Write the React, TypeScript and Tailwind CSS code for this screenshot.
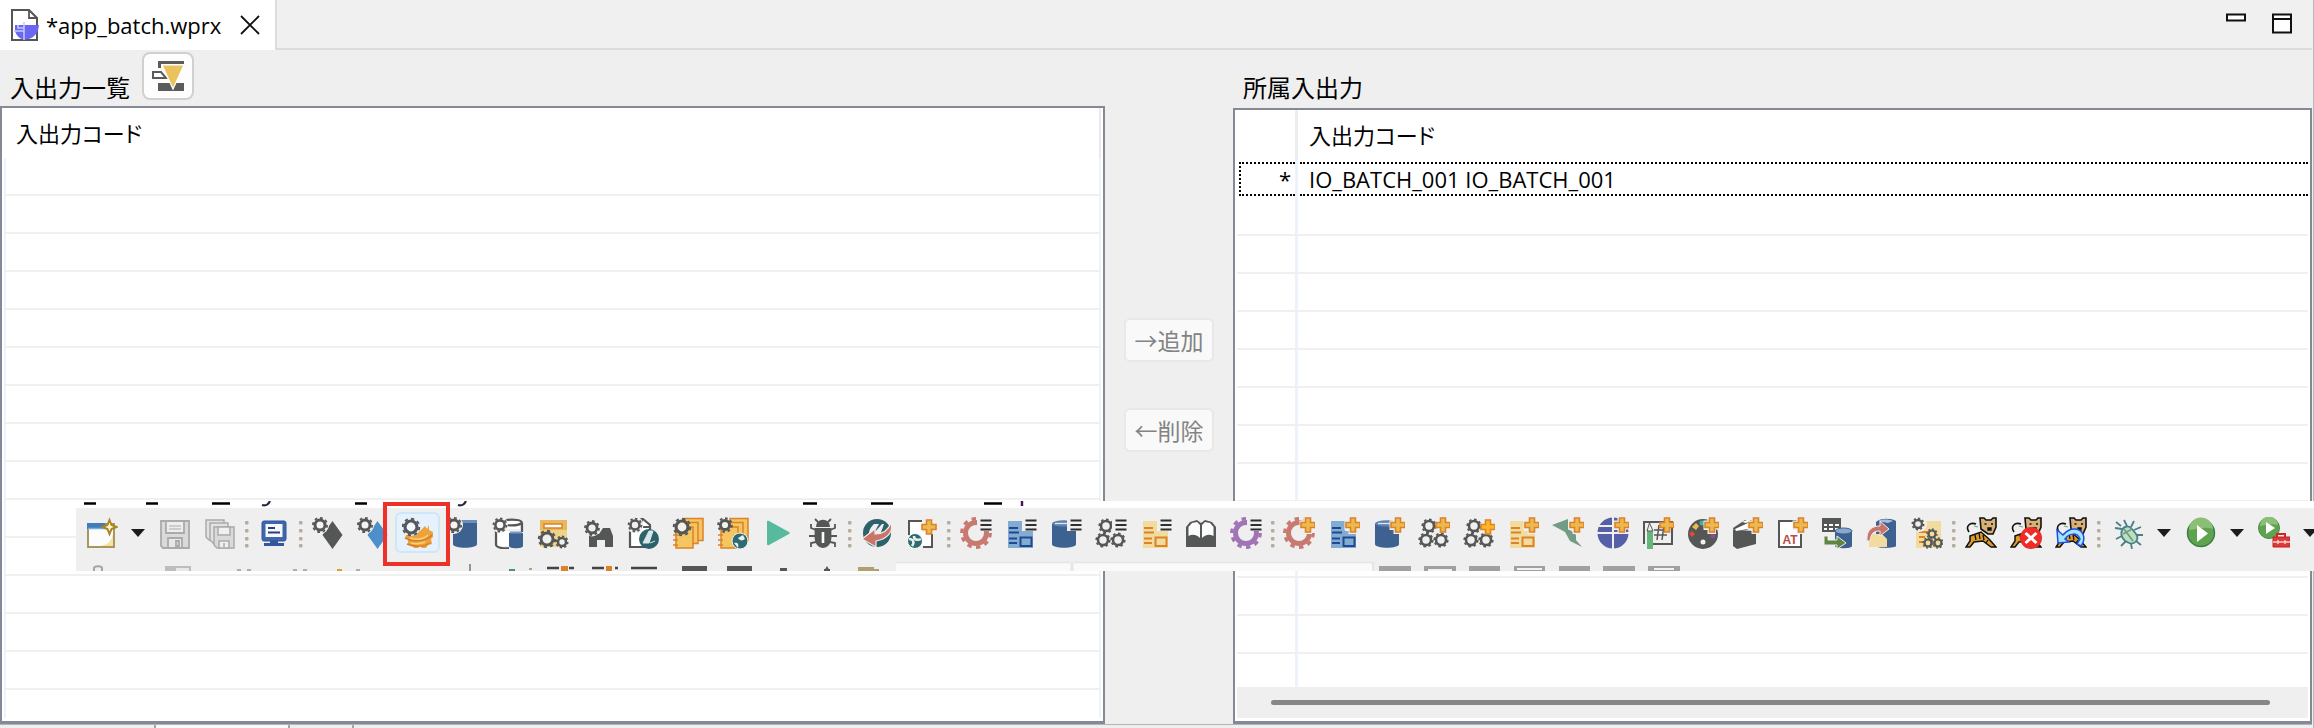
import React from "react";

const DARK = "#555756";
const BLUE = "#3d6190";
const ORANGE = "#dc8228";

type GearProps = { x: number; y: number; r: number; w?: number; c?: string; teeth?: number; t?: number; fill?: string };

function Gear({ x, y, r, w = 3, c = DARK, teeth = 8, t = 2, fill = "none" }: GearProps) {
  return (
    <g stroke={c}>
      <circle cx={x} cy={y} r={r} strokeWidth={w} fill={fill} />
      <circle cx={x} cy={y} r={r + w / 2 + t / 2 - 0.3} strokeWidth={t} fill="none" pathLength={teeth * 2} strokeDasharray="1 1" />
    </g>
  );
}

const CornerGear = () => <Gear x={8} y={8} r={5} w={3} t={1.8} fill="#f4f4f4" />;

const Plus = ({ c = "#ecb94f" }: { c?: string }) => (
  <path d="M22.500 1h5v4.500h4.500v5h-4.500v4.500h-5v-4.500H18v-5h4.500z" fill={c} stroke={ORANGE} strokeWidth="1.600" />
);

const Lines = () => (
  <g>
    <rect x="17" y="0" width="15" height="14" fill="#efefef" />
    <path d="M20.500 3.500h11M20.500 8h11M20.500 12.500h11" stroke="#2f2f2f" strokeWidth="1.800" />
  </g>
);

const PlusPad = ({ c }: { c?: string }) => (
  <g>
    <path d="M20.500 0h11.500v12.500h-3v4.500h-8.500v-4h-4V3.500h4z" fill="#efefef" />
    <Plus c={c} />
  </g>
);

const Cyl = () => (
  <g>
    <path d="M2 7v20c0 5 24 5 24 0V7z" fill={BLUE} />
    <ellipse cx="14" cy="6.500" rx="12" ry="3.200" fill="#5d82b1" />
    <path d="M5 6.500h18" stroke="#dfe8f2" strokeWidth="1.300" />
  </g>
);

const Form = ({ bg, c }: { bg: string; c: string }) => (
  <g>
    <path d="M3 4h14v10h11v17H3z" fill={bg} />
    <path d="M4 11h9M4 15.500h10M4 21.500h8M4 26h8" stroke={c} strokeWidth="1.800" />
    <rect x="15.500" y="20.500" width="11" height="8.500" fill="none" stroke={c} strokeWidth="2" />
  </g>
);

const Trio = () => (
  <g>
    <Gear x={11} y={9} r={5} w={2.6} t={1.6} />
    <Gear x={8} y={23} r={5} w={2.6} t={1.6} />
    <Gear x={23} y={23} r={5} w={2.6} t={1.6} />
  </g>
);

const BigGear = ({ c }: { c: string }) => <Gear x={16} y={16} r={10.5} w={5} t={3.2} c={c} teeth={10} />;

const Pages = () => (
  <g stroke={ORANGE} strokeWidth="1.500" fill="#f4c560">
    <path d="M13 1.500h18v22H13z" />
    <path d="M9 5.500h17v21H9z" />
    <path d="M4 10h17v21H4z" />
    <path d="M1 18h5M1 23h5M1 28h5" />
  </g>
);

const Tiger = () => (
  <g>
    <path d="M4 15c-4-6 1-10 7-8" fill="none" stroke="#111" strokeWidth="1.600" />
    <path d="M5 19l11-4 8 7 7 8h-5l-8-6-9 1-4 5H1l4-6z" fill="#e09a2c" stroke="#111" strokeWidth="1.500" />
    <path d="M10 18l1 5M14 16l1 6M18 18l1 5M23 23l-2 3" stroke="#111" strokeWidth="1.300" />
    <path d="M15 1h4l2 2h5l2-2h3v9l-3 7h-5l-7-5z" fill="#d7b078" stroke="#111" strokeWidth="1.600" />
    <path d="M19.500 7h2M26 7h2M23 11h3v2h-3z" stroke="#111" strokeWidth="1.400" />
    <path d="M9 9l4 1" stroke="#7aa77a" strokeWidth="1.200" />
  </g>
);

const icons: Record<string, React.ReactNode> = {
  newWindow: (
    <g>
      <rect x="2" y="7" width="26" height="23" fill="#fbfcfb" stroke="#a18b4e" strokeWidth="1.800" />
      <path d="M14 29c8-1 12-5 13-13v13z" fill="#f4e3a2" />
      <path d="M1 6h18v6H1z" fill="#3f7cbc" />
      <path d="M2 11.500h25" stroke="#77aede" strokeWidth="1.500" />
      <path d="M23.500 3l2 5 5 2-5 2-2 5-2-5-5-2 5-2z" fill="#fff7d3" stroke="#a98524" strokeWidth="2" />
    </g>
  ),
  save: (
    <g fill="#dadada" stroke="#aaa" strokeWidth="1.800">
      <path d="M2 4h28v27H4l-2-2z" />
      <path d="M7 4h18v12H7z" fill="#eee" />
      <path d="M10 9h12M10 12h12" strokeWidth="1.200" />
      <path d="M9 21h14v10H9z" fill="#e8e8e8" />
      <path d="M17 24h3v5h-3z" />
    </g>
  ),
  saveAll: (
    <g fill="#e2e2e2" stroke="#aaa" strokeWidth="1.500">
      <path d="M2 3h18v20H5l-3-3z" />
      <path d="M6 6h18v20H9l-3-3z" />
      <path d="M10 10h20v21H13l-3-3z" fill="#dadada" />
      <path d="M14 10h12v8H14z" fill="#f0f0f0" />
      <path d="M15 24h10v7H15z" fill="#efefef" />
      <path d="M20 26v4" />
    </g>
  ),
  monitor: (
    <g>
      <rect x="4" y="4" width="24" height="20" rx="2" fill="#3f66ad" stroke="#31579d" strokeWidth="1" />
      <rect x="7.500" y="7" width="17" height="13" fill="#f6f8fc" />
      <path d="M10 11h7M10 15.500h12" stroke="#243f86" strokeWidth="1.800" />
      <path d="M12 24h8v2h6v3H6v-3h6z" fill="#31579d" />
    </g>
  ),
  darkDiamond: (
    <g>
      <path d="M20.500 4l10 14-10 14-10-14z" fill={DARK} />
      <circle cx="8" cy="8" r="9" fill="#efefef" />
      <CornerGear />
    </g>
  ),
  blueDiamond: (
    <g>
      <path d="M20.500 4l10 14-10 14-10-14z" fill="#4d8fca" />
      <circle cx="8" cy="8" r="9" fill="#efefef" />
      <CornerGear />
    </g>
  ),
  batch: (
    <g>
      <path d="M27 8v5l4 2v5l-2 2 1 5-4 1-2 3h-4l-2-2-2 2h-4l-2-3-4-1v-5l-3-1 1-3 7-1 7-3 5-5 2 3z" fill="#eda23c" />
      <path d="M3 21c7 4 21 4 27-3M5 27c7 3 17 3 23-1" stroke="#dc7a24" strokeWidth="1.500" fill="none" />
      <path d="M8 21c6 2 13 2 18-3M9 26c4 1 9 1 14-1" stroke="#f9d27a" strokeWidth="1.500" fill="none" />
      <circle cx="9" cy="9.500" r="9.500" fill="#e5f1fc" />
      <Gear x={9} y={10} r={6} w={3.2} t={2} c="#55585c" fill="#f4f8fc" />
    </g>
  ),
  cylinder: (
    <g>
      <path d="M6 6v21c0 5 24 5 24 0V6z" fill={BLUE} />
      <path d="M10 4.500h20" stroke="#6b8fba" strokeWidth="3" />
      <circle cx="7" cy="8" r="9" fill="#efefef" />
      <Gear x={7} y={8} r={5} w={3} t={1.8} fill="#f4f4f4" />
    </g>
  ),
  cylinders: (
    <g>
      <path d="M5 14h12v15H6zM14 4h14v8H14z" fill="#fff" />
      <path d="M4 14v14c1 3 9 4 13 3M14 3c8-1 16 0 16 3v9M14 8c7 1 13 0 16-2" fill="none" stroke={DARK} strokeWidth="2.200" />
      <path d="M17 16v13c0 3 14 3 14 0V16z" fill={BLUE} />
      <path d="M18 15.500h12" stroke="#7b9bc3" strokeWidth="2" />
      <circle cx="8" cy="8" r="8" fill="#efefef" />
      <Gear x={8} y={8} r={4.6} w={2.6} t={1.8} fill="#f8f8f8" />
    </g>
  ),
  formGears: (
    <g>
      <path d="M3 3h27v27H3z" fill="#edd488" />
      <path d="M3 3h27v10H3z" fill="#e9b85d" />
      <rect x="7" y="7" width="18" height="4" fill="#fff" stroke={ORANGE} strokeWidth="1.500" />
      <Gear x={10} y={22} r={6} w={3} t={2} fill="#efefef" />
      <Gear x={25} y={25} r={4} w={2.5} t={1.6} fill="#efefef" />
    </g>
  ),
  binoculars: (
    <g>
      <path d="M7 30V19l4-2h6l4-6h7l3 8v11h-8v-7h-8v7z" fill={DARK} />
      <circle cx="10" cy="11" r="8.500" fill="#efefef" />
      <Gear x={10} y={11} r={5} w={2.8} t={1.8} />
    </g>
  ),
  docTeal: (
    <g>
      <path d="M3 14v16h20V8l-7-6H7" fill="#fff" stroke={DARK} strokeWidth="2.200" />
      <path d="M15 2v8h9" fill="none" stroke={DARK} strokeWidth="1.800" />
      <circle cx="8" cy="8" r="8.500" fill="#efefef" />
      <Gear x={8} y={8} r={4.5} w={2.6} t={1.8} />
      <circle cx="22" cy="22" r="10" fill="#2d626b" />
      <path d="M22 14l-6 12h6l4-12zM23 26l5-2" fill="#d7e8e8" stroke="#d7e8e8" strokeWidth="1" />
    </g>
  ),
  pages: (
    <g>
      <Pages />
      <Gear x={10} y={10} r={6} w={3.2} t={2} fill="#f6f1e6" />
    </g>
  ),
  pagesTeal: (
    <g>
      <Pages />
      <Gear x={8} y={8} r={4.6} w={3} t={2} fill="#f6f1e6" />
      <circle cx="23" cy="24" r="8" fill="#2d6b70" stroke="#efefef" strokeWidth="1" />
      <path d="M17 26c4-1 5 1 4 5M21 21c3 4 5 2 7 1l-2-4z" fill="#e6f1ef" />
    </g>
  ),
  play: <path d="M5 5c0-1 1-1.500 2-1l20 11c1 .7 1 1.500 0 2L7 28c-1 .6-2 0-2-1z" fill="#57b99d" />,
  bug: (
    <g fill="none" stroke={DARK} strokeWidth="1.800">
      <path d="M9 13l-5-2V7M23 13l5-2V7M8 19H2M24 19h6M9 25l-5 1v4M23 25l5 1v4M11 5L8 2M21 5l3-3" />
      <path d="M10 9c0-7 12-7 12 0z" fill={DARK} />
      <path d="M8.500 12h15v9c0 12-15 12-15 0z" fill={DARK} />
      <path d="M16 15v11" stroke="#fff" strokeWidth="2.600" />
    </g>
  ),
  globeArrow: (
    <g>
      <circle cx="16" cy="16" r="14" fill="#2d626b" />
      <path d="M8 17c0-5 3-8 5-10l5 0-5 9 8-9h2l-4 11z" fill="#efefef" />
      <path d="M30 6c3 9-4 16-15 18v6L1 22l13-10v5c8 0 13-3 16-11z" fill="#cb7469" stroke="#efefef" strokeWidth="1.200" />
    </g>
  ),
  docPlus: (
    <g>
      <path d="M4 5h12v10h9v14H4z" fill="#fff" />
      <path d="M3 18V4h13M26 17v13h-9" fill="none" stroke={DARK} strokeWidth="2" />
      <g transform="translate(-2 2)"><Plus /></g>
      <circle cx="9" cy="24" r="7.500" fill="#2d6b70" stroke="#fff" />
      <path d="M3 22c4 0 6 3 3 7M8 19c0 5 5 4 7 3" stroke="#e6f1ef" strokeWidth="2.500" fill="none" />
    </g>
  ),
  redGearList: <g><BigGear c="#c87a71" /><Lines /></g>,
  blueFormList: <g><Form bg="#82add1" c="#214894" /><Lines /></g>,
  cylList: <g><Cyl /><Lines /></g>,
  trioList: <g><Trio /><Lines /></g>,
  yellowFormList: <g><Form bg="#f1db9e" c={ORANGE} /><Lines /></g>,
  book: (
    <g>
      <path d="M1 30V10l4-5 7-2 4 3 4-3 7 2 4 5v20z" fill={DARK} />
      <path d="M3.500 19V10l3.500-4 5-1 3 3v13c-4-4-8-4-11.500-2zM28.500 19V10L25 6l-5-1-3 3v13c4-4 8-4 11.500-2z" fill="#fbfbfb" />
    </g>
  ),
  purpleGearList: <g><BigGear c="#a174b7" /><Lines /></g>,
  redGearPlus: <g><BigGear c="#c87a71" /><PlusPad /></g>,
  blueFormPlus: <g><Form bg="#82add1" c="#214894" /><PlusPad /></g>,
  cylPlus: <g><Cyl /><PlusPad /></g>,
  trioPlus: <g><Trio /><Plus /></g>,
  trioPlusBright: <g><Trio /><g transform="translate(0 2)"><Plus c="#ffb429" /></g></g>,
  yellowFormPlus: <g><Form bg="#f1db9e" c={ORANGE} /><PlusPad /></g>,
  flagPlus: <g><path d="M0 8l16-6v10l5 3 3 3v5l6 7-12-6-5-9z" fill="#739c86" /><PlusPad /></g>,
  globePlus: (
    <g>
      <circle cx="16" cy="16" r="15.500" fill="#555fa8" />
      <path d="M0 16h32M16 0v32M2 9h16" stroke="#efefef" strokeWidth="2" />
      <PlusPad />
    </g>
  ),
  gridPlus: (
    <g>
      <path d="M2 27V5h28v22H11" fill="none" stroke={DARK} strokeWidth="2" />
      <path d="M17 8l-2 15M22 8l-2 15M12 13h14M12 18h13" stroke={DARK} strokeWidth="1.500" />
      <path d="M5 14l2.500-6L11 14v18H5z" fill="#66b678" />
      <path d="M5 14l2.500-8L11 14z" fill="#f2f2f2" stroke={DARK} strokeWidth="1" />
      <Plus />
    </g>
  ),
  palettePlus: (
    <g>
      <circle cx="16" cy="17" r="15" fill={DARK} />
      <path d="M9 6l3 3-3 4-4-3z" fill="#ecb94f" />
      <path d="M5 14l3 3-3 3-3-3z" fill="#df4b35" />
      <circle cx="15" cy="6" r="2.500" fill="#41b49c" />
      <circle cx="26" cy="19" r="2.500" fill="#824f93" />
      <circle cx="16" cy="25" r="2.500" fill="#f2f2f2" />
      <PlusPad />
    </g>
  ),
  clapperPlus: (
    <g>
      <path d="M2 13l23 1v13L6 32l-4-3z" fill={DARK} />
      <path d="M2 11l12-8 8 0v9l-19 3z" fill={DARK} />
      <path d="M4 12l13-6 4 1-4 5-12 2zM11 5l5-2h4l-5 3z" fill="#fff" />
      <PlusPad />
    </g>
  ),
  atPlus: (
    <g>
      <rect x="3" y="4" width="22" height="26" fill="#fff" stroke={DARK} strokeWidth="2" />
      <text x="14" y="26.500" fontFamily="Liberation Sans, sans-serif" fontWeight="700" fontSize="12" textAnchor="middle" fill="#b94e42">AT</text>
      <PlusPad />
    </g>
  ),
  tableToDb: (
    <g>
      <path d="M1 1h19v14H1z" fill={DARK} />
      <path d="M3 7h3v2H3zM8 7h4v2H8zM14 7h4v2h-4zM3 11h3v2H3zM8 11h4v2H8zM14 11h4v2h-4z" fill="#fff" />
      <path d="M14 14v15c0 3 17 3 17 0V14z" fill={BLUE} />
      <ellipse cx="22.500" cy="14" rx="8.500" ry="3" fill="#89a9cc" stroke={BLUE} />
      <path d="M3 19h4v4h9v-4l9 7-9 6v-4H3z" fill="#5f8541" stroke="#efefef" strokeWidth="1" />
    </g>
  ),
  dbArrow: (
    <g>
      <path d="M10 5v24c3 3 20 2 20 0V4c-5-3-16-3-20 1z" fill={BLUE} />
      <path d="M12 4c4-2 11-2 15 0l-5 2z" fill="#a9c0db" />
      <path d="M3 17h13l5 5v8H3z" fill="#f1db9e" />
      <path d="M1 24C0 12 7 9 14 9V4l9 8-9 7v-5c-6 0-9 2-10 10z" fill="#cb7469" stroke="#efefef" strokeWidth="1" />
    </g>
  ),
  gearForm: (
    <g>
      <path d="M5 4h25v27H5z" fill="#f1db9e" />
      <path d="M8 15h9M8 20h6M8 25h6" stroke={ORANGE} strokeWidth="1.800" />
      <circle cx="8" cy="7" r="8" fill="#efefef" />
      <Gear x={7} y={7} r={4} w={2.4} t={1.6} />
      <Gear x={21} y={17} r={3.5} w={2.2} t={1.4} />
      <Gear x={17} y={26} r={3.5} w={2.2} t={1.4} />
      <Gear x={27} y={26} r={3.5} w={2.2} t={1.4} />
    </g>
  ),
  tiger: <Tiger />,
  tigerStop: (
    <g>
      <Tiger />
      <circle cx="21" cy="21" r="11" fill="#ee2b26" />
      <path d="M15.500 16l11 10M26.500 16l-11 10" stroke="#fff" strokeWidth="3" />
    </g>
  ),
  tigerReload: (
    <g>
      <Tiger />
      <path d="M2 13l1 13 11-1-4-3c4-6 12-7 15 0l-3 5 4 2c6-8 2-17-7-17-6 0-8 3-11 6z" fill="#9fe5fb" stroke="#1f4fe0" strokeWidth="1.500" />
    </g>
  ),
  debug: (
    <g fill="none" stroke="#49818a" strokeWidth="1.800">
      <path d="M10 12L3 11M12 18l-8 4M15 9l-3-6M19 10l3-6M22 13l7-3M25 18h6M24 24l5 4M19 27l1 5M14 24l-5 5M9 9L4 5" />
      <path d="M10 13c2-4 7-5 10-1l4 5c4 6-2 11-7 9-6-2-9-8-7-13z" fill="#bfe0ba" />
      <path d="M12 12l9 12M11 17l9-5" stroke="#6c9e91" />
    </g>
  ),
  run: (
    <g>
      <circle cx="16" cy="16" r="13.500" fill="#5fa350" stroke="#3c8045" strokeWidth="1.500" />
      <path d="M4 13a12 12 0 0 1 24-1c-8-3-16 0-24 1z" fill="#8bbf76" />
      <path d="M12 8v17l11-8.500z" fill="#fff" />
    </g>
  ),
  runTool: (
    <g>
      <circle cx="11" cy="11" r="10.500" fill="#5fa350" stroke="#4a8c4c" />
      <path d="M2 9a9 9 0 0 1 18-1c-6-2-12 0-18 1z" fill="#8bbf76" />
      <path d="M8 5v12l9-6z" fill="#fff" />
      <path d="M19 20v-3h8v3" fill="none" stroke="#cf2626" strokeWidth="2" />
      <path d="M15 20h17v10H15z" fill="#dc3b36" stroke="#c22222" />
      <path d="M15 25h17M20 23v4M27 23v4" stroke="#fbd5d0" strokeWidth="1.300" />
    </g>
  ),
};

function Tool({ name, active, fluid }: { name: string; active?: boolean; fluid?: boolean }) {
  return (
    <button
      type="button"
      aria-label={name}
      className={`relative flex h-[41px] items-center justify-center ${fluid ? "min-w-0 flex-1" : "w-[45px] shrink-0"} ${active ? "z-10 rounded-md border-2 border-[#cfe5f8] bg-[#e5f1fc]" : ""}`}
    >
      <svg viewBox="0 0 32 32" className="size-8 shrink-0">{icons[name]}</svg>
      {active && <span className="absolute -top-3 -left-3.5 h-16 w-[67px] border-4 border-[#ee3128]" />}
    </button>
  );
}

const Sep = ({ wide }: { wide?: boolean }) => (
  <span className={`flex shrink-0 justify-center ${wide ? "w-3" : "w-[9px]"}`}>
    <svg viewBox="0 0 4 32" className="h-8 w-1">
      {[4, 12, 20, 27].map((y) => <rect key={y} x="0" y={y} width="3.500" height="3.500" rx="1" fill="#b5ac9c" />)}
    </svg>
  </span>
);

const Drop = () => (
  <button type="button" aria-label="menu" className="flex h-[41px] w-7 shrink-0 items-center justify-center">
    <svg viewBox="0 0 16 10" className="h-2.5 w-4"><path d="M1 1h14L8 9z" fill="#1c1c1c" /></svg>
  </button>
);

const tools = (names: string[]) => names.map((n) => <Tool key={n} name={n} active={n === "batch"} />);

const groupGenerate = ["darkDiamond", "blueDiamond", "batch", "cylinder", "cylinders", "formGears", "binoculars", "docTeal", "pages", "pagesTeal", "play", "bug"];
const groupList = ["redGearList", "blueFormList", "cylList", "trioList", "yellowFormList", "book", "purpleGearList"];
const groupNew = ["redGearPlus", "blueFormPlus", "cylPlus", "trioPlus", "trioPlusBright", "yellowFormPlus", "flagPlus", "globePlus", "gridPlus", "palettePlus", "clapperPlus", "atPlus", "tableToDb", "dbArrow", "gearForm"];

function Toolbar() {
  return (
    <div className="absolute top-[501px] right-0 left-[76px] overflow-hidden bg-[#efefef]">
      <div className="h-[7px] bg-white">
        <svg width="960" height="7" className="block">
          <path d="M8 2.500h12M70 2.500h12M136 2.500h18M279 2.500h12M727 2.500h14M795 2.500h22M908 2.500h18" stroke="#000" strokeWidth="2.400" />
          <path d="M186 4c4 1 6 0 8-4M382 4c4 1 6 0 8-4" stroke="#2a2440" strokeWidth="2.200" fill="none" />
          <path d="M351 2h13" stroke="#d8d8d8" strokeWidth="1" />
          <path d="M946 0v5" stroke="#41145f" strokeWidth="2.400" />
        </svg>
      </div>
      <div className="flex items-center pt-1 pl-[3px]">
        <Tool name="newWindow" />
        <Drop />
        {tools(["save", "saveAll"])}
        <Sep />
        <Tool name="monitor" />
        <Sep />
        {tools(groupGenerate)}
        <Sep />
        {tools(["globeArrow", "docPlus"])}
        <Sep />
        {tools(groupList)}
        <Sep />
        <div className="flex w-[672px] shrink-0">
          {groupNew.map((n) => <Tool key={n} name={n} fluid />)}
        </div>
        <Sep />
        {tools(["tiger", "tigerStop", "tigerReload"])}
        <Sep wide />
        <Tool name="debug" />
        <Drop />
        <Tool name="run" />
        <Drop />
        <Tool name="runTool" />
        <Drop />
      </div>
      <svg width="1640" height="18" className="block">
        <path d="M18 18v-2.500c0-3 8-3 8 0V18" fill="none" stroke="#a5a5a5" strokeWidth="2" />
        <path d="M89 13h26v5H89z" fill="#bdbdbd" />
        <path d="M100 15h13v3h-13z" fill="#e8e8e8" />
        <path d="M161 17h4M171 17h4M217 17h4M227 17h4M280 17h4" stroke="#999" strokeWidth="1.500" />
        <path d="M261 17h5" stroke="#d8a030" strokeWidth="2" />
        <path d="M394 11v7" stroke="#777" strokeWidth="1.500" />
        <path d="M433 17h6" stroke="#4b9663" strokeWidth="2" />
        <path d="M453 16h3" stroke="#b5a284" strokeWidth="2" />
        <path d="M471 15h12M493 15h5M516 15h12M539 15h3M555 15h26" stroke="#444" strokeWidth="2.500" />
        <path d="M485 13h7v5h-7zM530 13h6v5h-6z" fill="#dc8228" />
        <path d="M606 13h25v5h-25zM651 13h25v5h-25zM704 15h7v3h-7zM751 13l3 5h-6zM748 16h6v2h-6z" fill={DARK} />
        <path d="M782 14h16v2h5v2h-21z" fill="#b0a070" />
        <path d="M820 10h174v8H820zM998 10h298v8H998z" fill="#fafafa" />
        <path d="M820 9.500h174M998 9.500h298M996 9v9M1297 9v9" stroke="#e4e4e4" strokeWidth="1.500" />
        <path d="M1303 13h32v5h-32zM1348 13h32v5h-32zM1393 13h31v5h-31zM1438 13h31v5h-31zM1483 13h31v5h-31zM1527 13h32v5h-32zM1572 13h32v5h-32z" fill="#a0a0a0" />
        <path d="M1352 17h24M1441 16h25M1578 16h20" stroke="#f2f2f2" strokeWidth="1.800" />
      </svg>
    </div>
  );
}

const headFont = "h-[50px] p-0 text-left align-middle text-[22px] font-normal leading-8 [font-feature-settings:'palt']";
const line = "border-b-2 border-[#f0f0f0]";

export default function App() {
  return (
    <div className="relative flex h-screen min-h-[728px] flex-col overflow-hidden bg-[#efefef] pr-0.5 font-['Open_Sans','Noto_Sans_CJK_JP',sans-serif] text-2xl text-black">
      <header className="flex h-[50px] shrink-0 items-stretch bg-[#f0f0f0]">
        <div className="flex w-[277px] items-center border-r-2 border-[#dcdcdc] bg-white pl-2.5">
          <svg viewBox="0 0 30 34" className="h-[34px] w-[30px]">
            <path d="M2 2h17l8 8v22H2z" fill="#fff" stroke="#555" strokeWidth="2" />
            <path d="M19 2v8h8" fill="none" stroke="#555" strokeWidth="1.800" />
            <path d="M5 17h24c-1 16-20 20-24 6z" fill="#6a67f3" />
            <path d="M14 14v18M4 23h10M8 17v3h6" stroke="#c9c9ff" strokeWidth="1.500" fill="none" />
          </svg>
          <span className="ml-1.5 w-[181px] text-[22px] leading-8 whitespace-nowrap">*app_batch.wprx</span>
          <button type="button" aria-label="close" className="ml-3">
            <svg viewBox="0 0 22 22" className="size-[22px]"><path d="M2 2l18 18M20 2L2 20" stroke="#111" strokeWidth="1.800" /></svg>
          </button>
        </div>
        <div className="flex flex-1 items-start justify-end gap-6 border-b-2 border-[#dcdcdc] pt-3 pr-[19px]">
          <button type="button" aria-label="minimize">
            <svg viewBox="0 0 22 24" className="h-6 w-[22px]"><rect x="2" y="2.500" width="18" height="6" fill="#fff" stroke="#111" strokeWidth="2" /></svg>
          </button>
          <button type="button" aria-label="maximize">
            <svg viewBox="0 0 22 24" className="h-6 w-[22px]"><path d="M2 2.500h18v18H2zM2 7h18" fill="#fff" stroke="#111" strokeWidth="2" /></svg>
          </button>
        </div>
      </header>

      <main className="flex min-h-0 flex-1">
        <section className="flex min-w-0 flex-[1105] flex-col">
          <div className="flex h-14 shrink-0 items-start pl-2.5">
            <h2 className="mt-[22px] w-[132px] leading-8">入出力一覧</h2>
            <button type="button" aria-label="filter" className="mt-0.5 flex h-12 w-[52px] items-center justify-center rounded-lg border-2 border-[#d0d0d0] bg-[#fdfdfd]">
              <svg viewBox="0 0 34 32" className="h-8 w-[34px]">
                <path d="M7 1h26v3H10v4H7zM7 23h26v8H7z" fill="#5a5c5b" />
                <path d="M10 12H2v6h13z" fill="#fff" stroke="#5a5c5b" strokeWidth="2" />
                <path d="M11 5h22L22 29z" fill="#ebc25e" stroke="#fff" strokeWidth="1.200" />
              </svg>
            </button>
          </div>
          <div className="min-h-0 flex-1 overflow-hidden border-2 border-b-[3px] border-[#858995] bg-white px-0.5 pb-[3px]">
            <table className="w-full table-fixed border-separate border-spacing-0">
              <thead>
                <tr><th className={`${headFont} border-r-2 border-[#e9eaec] pl-3!`}>入出力コード</th></tr>
              </thead>
              <tbody>
                {Array.from({ length: 14 }, (_, i) => (
                  <tr key={i}><td className={`h-[38px] border-x-2 border-x-[#eef4fc] p-0 ${line}`} /></tr>
                ))}
                <tr><td className="h-7 border-x-2 border-x-[#eef4fc] p-0" /></tr>
              </tbody>
            </table>
          </div>
        </section>

        <div className="flex w-32 shrink-0 flex-col items-center gap-[46px] pt-[268px]">
          {["→追加", "←削除"].map((t) => (
            <button key={t} type="button" disabled className="h-11 w-[90px] rounded-md border-2 border-[#e8e8e8] bg-[#f9f9f9] font-['Noto_Sans_CJK_JP',sans-serif] text-[23px] leading-8 whitespace-nowrap text-[#838383]">{t}</button>
          ))}
        </div>

        <section className="flex min-w-0 flex-[1079] flex-col">
          <div className="h-[58px] shrink-0 pt-[22px] pl-2.5">
            <h2 className="leading-8">所属入出力</h2>
          </div>
          <div className="flex min-h-0 flex-1 flex-col overflow-hidden border-2 border-b-[3px] border-[#858995] bg-white px-0.5 pb-[3px]">
            <div className="min-h-0 flex-1 overflow-hidden">
              <table className="w-full table-fixed border-separate border-spacing-0">
                <colgroup><col className="w-[61px]" /><col /></colgroup>
                <thead>
                  <tr>
                    <th className={`${headFont} border-r-[3px] border-[#ededef]`} aria-label="mark" />
                    <th className={`${headFont} pl-[11px]!`}>入出力コード</th>
                  </tr>
                </thead>
                <tbody>
                  <tr>
                    <td className="h-[38px] border-r-[3px] border-[#edf3fb] p-0 pl-0.5 align-top">
                      <div className="mt-0.5 h-[34px] border-y-2 border-l-2 border-dotted border-black pr-1 text-right text-[22px] leading-[30px]">*</div>
                    </td>
                    <td className="h-[38px] p-0 pl-0.5 align-top">
                      <div className="mt-0.5 h-[34px] border-y-2 border-dotted border-black pl-[9px] text-[22px] leading-[30px] whitespace-nowrap">IO_BATCH_001 IO_BATCH_001</div>
                    </td>
                  </tr>
                  {Array.from({ length: 13 }, (_, i) => (
                    <tr key={i}>
                      <td className={`h-[38px] border-r-[3px] border-r-[#edf3fb] p-0 ${line}`} />
                      <td className={`h-[38px] p-0 ${line}`} />
                    </tr>
                  ))}
                </tbody>
              </table>
            </div>
            <div className="flex h-[31px] shrink-0 items-center bg-[#efefef] pr-[38px] pl-[34px]">
              <div className="h-[5px] flex-1 rounded-sm bg-[#868886]" />
            </div>
          </div>
        </section>
      </main>

      <footer className="flex h-1 shrink-0 border-t border-[#b4b4b4]">
        <span className="w-[156px] border-r-2 border-[#a4a4a4]" />
        <span className="w-[134px] border-r-2 border-[#a4a4a4] bg-[#f8f8f8]" />
        <span className="w-16 border-r-2 border-[#a4a4a4]" />
      </footer>

      <div className="absolute inset-y-0 right-0 w-px bg-[#b8b8b8]" />
      <Toolbar />
    </div>
  );
}
